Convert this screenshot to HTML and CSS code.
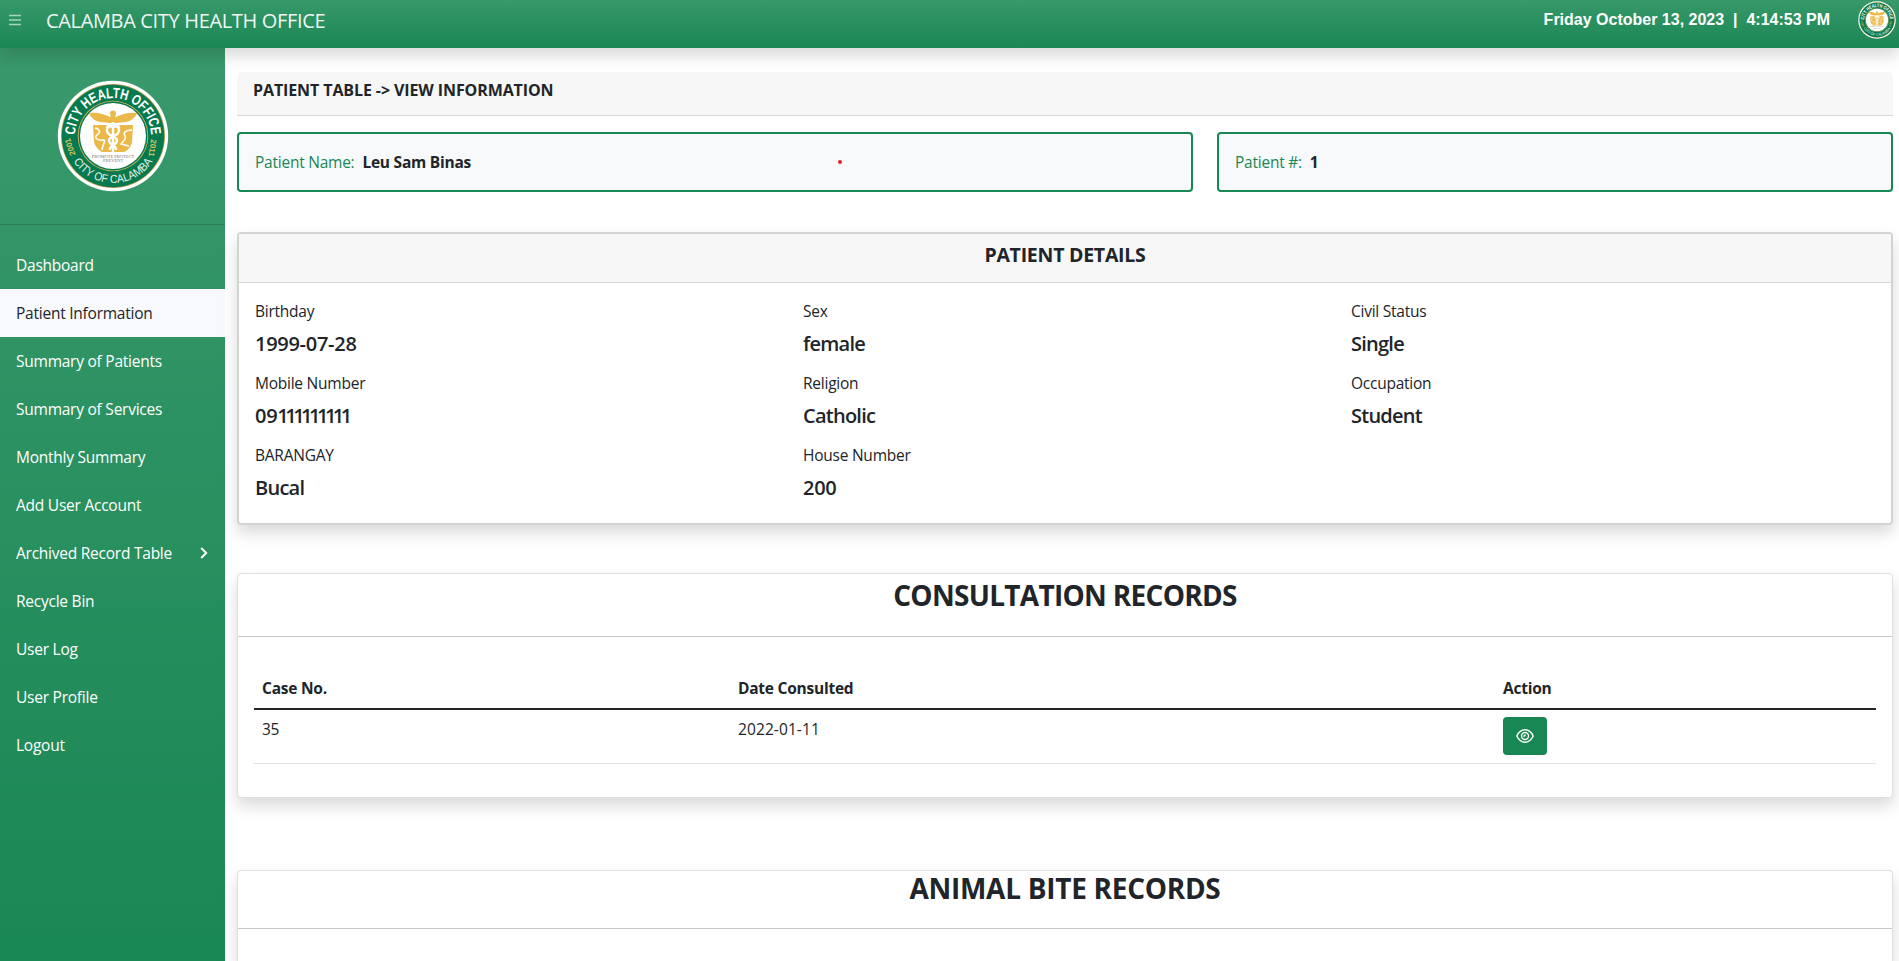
FILE: index.html
```html
<!DOCTYPE html>
<html lang="en">
<head>
<meta charset="utf-8">
<title>Calamba City Health Office</title>
<link rel="stylesheet" href="styles.css">
</head>
<body>
<svg class="defs" width="0" height="0">
  <symbol id="seal" viewBox="0 0 112 112">
    <circle cx="56" cy="56" r="55.2" fill="#fff"/>
    <circle cx="56" cy="56" r="52" fill="#b9a24c"/>
    <circle cx="56" cy="56" r="51.2" fill="#067a4e"/>
    <circle cx="56" cy="56" r="35.3" fill="#c9b25a"/>
    <circle cx="56" cy="56" r="34.4" fill="#067a4e"/>
    <circle cx="56" cy="56" r="33" fill="#fff"/>
    <path id="arc-top" d="M18 56a38 38 0 0 1 76 0" fill="none"/>
    <path id="arc-bottom" d="M9 56a47 47 0 0 0 94 0" fill="none"/>
    <text class="seal-top"><textPath href="#arc-top" startOffset="50%" text-anchor="middle" textLength="117" lengthAdjust="spacingAndGlyphs">CITY HEALTH OFFICE</textPath></text>
    <text class="seal-bottom"><textPath href="#arc-bottom" startOffset="50%" text-anchor="middle" textLength="94" lengthAdjust="spacingAndGlyphs">CITY OF CALAMBA</textPath></text>
    <text class="seal-year" transform="translate(18.500 74.500) rotate(-109)">2001</text>
    <text class="seal-year" transform="translate(94 59) rotate(98)">2011</text>
    <g fill="#eab94a">
      <path d="M32 33c8-1 15 1 21 4l3-3 3 3c6-3 13-5 21-4-2 5-6 8-11 9l-10 1h-6l-10-1c-5-1-9-4-11-9z"/>
      <circle cx="56" cy="33.500" r="3"/>
      <path d="M36 45h13c3 4 11 4 14 0h13l-1 18c-2 5-5 8-8 9H45c-4-2-7-6-8-10z"/>
    </g>
    <path d="M56 42v30M50 48c0-5 13-3 12 3s-11 5-10 10 8 4 7 9M62 48c0-5-13-3-12 3s11 5 10 10-8 4-7 9" fill="none" stroke="#fff" stroke-width="2.400"/>
    <path d="M38 48c5 1 6 4 2 7s2 6 6 5-1 6-1 10M75 50c-7 0-9 3-7 6s-3 6-4 8l8 2" fill="none" stroke="#fff" stroke-width="1.500"/>
    <text class="seal-motto" x="56" y="77.500">PROMOTE PROTECT</text>
    <text class="seal-motto" x="56" y="81.500">PREVENT</text>
  </symbol>
</svg>

<header class="topbar">
  <svg class="menu-icon" viewBox="0 0 12 12"><path d="M0 1.500h12M0 6h12M0 10.500h12"/></svg>
  <span class="brand">CALAMBA CITY HEALTH OFFICE</span>
  <span class="clock">Friday October 13, 2023 &nbsp;|&nbsp; 4:14:53 PM</span>
  <svg class="avatar"><use href="#seal"/></svg>
</header>

<div class="shell">
  <aside class="sidebar">
    <div class="logo-box"><svg class="logo"><use href="#seal"/></svg></div>
    <nav class="menu">
      <a class="item">Dashboard</a>
      <a class="item active">Patient Information</a>
      <a class="item">Summary of Patients</a>
      <a class="item">Summary of Services</a>
      <a class="item">Monthly Summary</a>
      <a class="item">Add User Account</a>
      <a class="item">Archived Record Table<svg class="chevron" viewBox="0 0 8 12"><path d="M1.200 1l5 5-5 5"/></svg></a>
      <a class="item">Recycle Bin</a>
      <a class="item">User Log</a>
      <a class="item">User Profile</a>
      <a class="item">Logout</a>
    </nav>
  </aside>

  <main class="content">
    <div class="crumb">PATIENT TABLE -&gt; VIEW INFORMATION</div>

    <div class="ident">
      <div class="ident-box"><span class="ident-label">Patient Name:</span><b>Leu Sam Binas</b><i class="dot"></i></div>
      <div class="ident-box"><span class="ident-label">Patient #:</span><b>1</b></div>
    </div>

    <section class="card details">
      <h5 class="details-title">PATIENT DETAILS</h5>
      <div class="fields">
        <div class="field"><span>Birthday</span><strong class="num">1999-07-28</strong></div>
        <div class="field"><span>Sex</span><strong>female</strong></div>
        <div class="field"><span>Civil Status</span><strong>Single</strong></div>
        <div class="field"><span>Mobile Number</span><strong class="num">09<span class="ones">111111111</span></strong></div>
        <div class="field"><span>Religion</span><strong>Catholic</strong></div>
        <div class="field"><span>Occupation</span><strong>Student</strong></div>
        <div class="field"><span>BARANGAY</span><strong>Bucal</strong></div>
        <div class="field"><span>House Number</span><strong class="num">200</strong></div>
      </div>
    </section>

    <section class="card consult">
      <h3 class="card-title">CONSULTATION RECORDS</h3>
      <table class="records">
        <thead><tr><th class="c-case">Case No.</th><th class="c-date">Date Consulted</th><th>Action</th></tr></thead>
        <tbody><tr><td>35</td><td class="date">2022-01-11</td><td><button class="view"><svg viewBox="0 0 18 16"><path d="M.8 8C2.600 4.200 5.500 1.800 9 1.800S15.400 4.200 17.200 8C15.400 11.800 12.500 14.200 9 14.200S2.600 11.800.8 8z"/><circle cx="9" cy="8" r="3.500"/><path d="M9 6.300c.2 1.200-.6 1.900-1.700 1.700"/></svg></button></td></tr></tbody>
      </table>
    </section>

    <section class="card bite">
      <h3 class="card-title">ANIMAL BITE RECORDS</h3>
    </section>
  </main>
</div>
</body>
</html>
```
FILE: styles.css
```css
* { box-sizing: border-box; }
body {
  margin: 0;
  height: 961px;
  overflow: hidden;
  background: #fff;
  color: #212529;
  font: 15.5px/24px "Open Sans", "Noto Sans", sans-serif;
  letter-spacing: -.24px;
}
.defs { position: absolute; }
.topbar {
  position: relative;
  z-index: 2;
  display: flex;
  align-items: flex-start;
  height: 48px;
  padding: 0 3px 0 9px;
  background: linear-gradient(#389869, #198754);
  box-shadow: 0 8px 16px rgba(0, 0, 0, .15);
  color: #fff;
}
.menu-icon { width: 12px; height: 12px; margin: 14px 25px 0 0; stroke: #a9d3be; stroke-width: 1.3; }
.brand { margin-top: 6px; font-size: 20px; line-height: 30px; letter-spacing: -.34px; opacity: .93; }
.clock { margin: 8px 28px 0 auto; font: bold 16px/24px "Liberation Sans", Arial, sans-serif; letter-spacing: 0; }
.avatar { width: 38px; height: 38px; margin-top: 1px; }
.seal-top, .seal-bottom, .seal-year, .seal-motto { letter-spacing: 0; }
.seal-top { font: bold 14.5px "Liberation Sans", sans-serif; fill: #fff; }
.seal-bottom { font: 11.5px "Liberation Sans", sans-serif; fill: #e4f1ea; }
.seal-year { font: bold 8px "Liberation Sans", sans-serif; fill: #d5c25f; }
.seal-motto { font: 4.5px "Liberation Serif", serif; fill: #777; text-anchor: middle; }

.shell { display: flex; height: 913px; overflow: hidden; }
.sidebar { flex: 0 0 225px; background: linear-gradient(#3a996c, #198754); color: #fff; }
.logo-box { height: 177px; padding: 32px 0 0 57px; border-bottom: 1px solid #2f7d58; }
.logo { display: block; width: 112px; height: 112px; }
.menu { padding-top: 16px; }
.item { display: flex; align-items: center; height: 48px; padding: 0 17px 0 16px; }
.item.active { background: #f8f9fc; color: #212529; }
.chevron { width: 8px; height: 12px; margin-left: auto; fill: none; stroke: #fff; stroke-width: 2; }

.content { flex: 1; min-width: 0; padding: 24px 6px 0 12px; }
.crumb { height: 44px; padding: 6px 16px; background: #f7f7f7; border-bottom: 1px solid #d6d6d6; border-radius: 4px 4px 0 0; font-size: 16px; font-weight: bold; letter-spacing: -.1px; }
.ident { display: grid; grid-template-columns: 956px 676px; gap: 24px; margin-top: 16px; }
.ident-box { position: relative; height: 60px; padding: 16px; border: 2px solid #198754; border-radius: 4px; background: #f8f9fb; }
.ident-label { margin-right: 8px; color: #198754; }
.dot { position: absolute; left: 599px; top: 26px; width: 4px; height: 4px; border-radius: 50%; background: #ed1c24; }

.card { background: #fff; border: 1px solid #dfdfdf; border-radius: 4px; box-shadow: 0 8px 16px rgba(0, 0, 0, .15); }
.details { height: 293px; margin-top: 40px; border: 2px solid #d3d3d3; }
.details-title { height: 49px; margin: 0; padding-top: 7px; background: #f7f7f7; border-bottom: 1px solid #d6d6d6; font-size: 19.5px; font-weight: bold; line-height: 28px; letter-spacing: -.25px; text-align: center; }
.fields { display: grid; grid-template-columns: repeat(3, 548px); grid-auto-rows: 72px; padding: 16px; }
.field { display: flex; flex-direction: column; gap: 9px; }
.field strong { font-size: 20px; font-weight: 600; letter-spacing: -.75px; }
.field .num { letter-spacing: -.28px; }
.field .ones { letter-spacing: -3.5px; }

.consult { height: 225px; margin-top: 48px; }
.bite { height: 91px; margin-top: 72px; border-bottom: 0; border-radius: 4px 4px 0 0; }
.card-title { height: 63px; margin: 0; padding-top: 4px; border-bottom: 1px solid #c8c8c8; font-size: 28px; font-weight: bold; line-height: 34px; letter-spacing: -.7px; text-align: center; }
.bite .card-title { height: 58px; padding-top: 0; letter-spacing: -.28px; }
.records { width: 1622px; margin: 30px 16px 0; border-collapse: collapse; table-layout: fixed; text-align: left; }
.records th { height: 42px; padding: 0 8px; border-bottom: 2px solid #212529; }
.records td { height: 54px; padding: 7px 8px 0; border-bottom: 1px solid #dee2e6; vertical-align: top; }
.records .date { letter-spacing: .1px; }
.c-case { width: 476px; }
.c-date { width: 765px; }
.view { display: grid; place-items: center; width: 44px; height: 38px; padding: 0; border: 0; border-radius: 4px; background: #198754; }
.view svg { width: 18px; height: 16px; fill: none; stroke: #fff; stroke-width: 1.4; }
```
